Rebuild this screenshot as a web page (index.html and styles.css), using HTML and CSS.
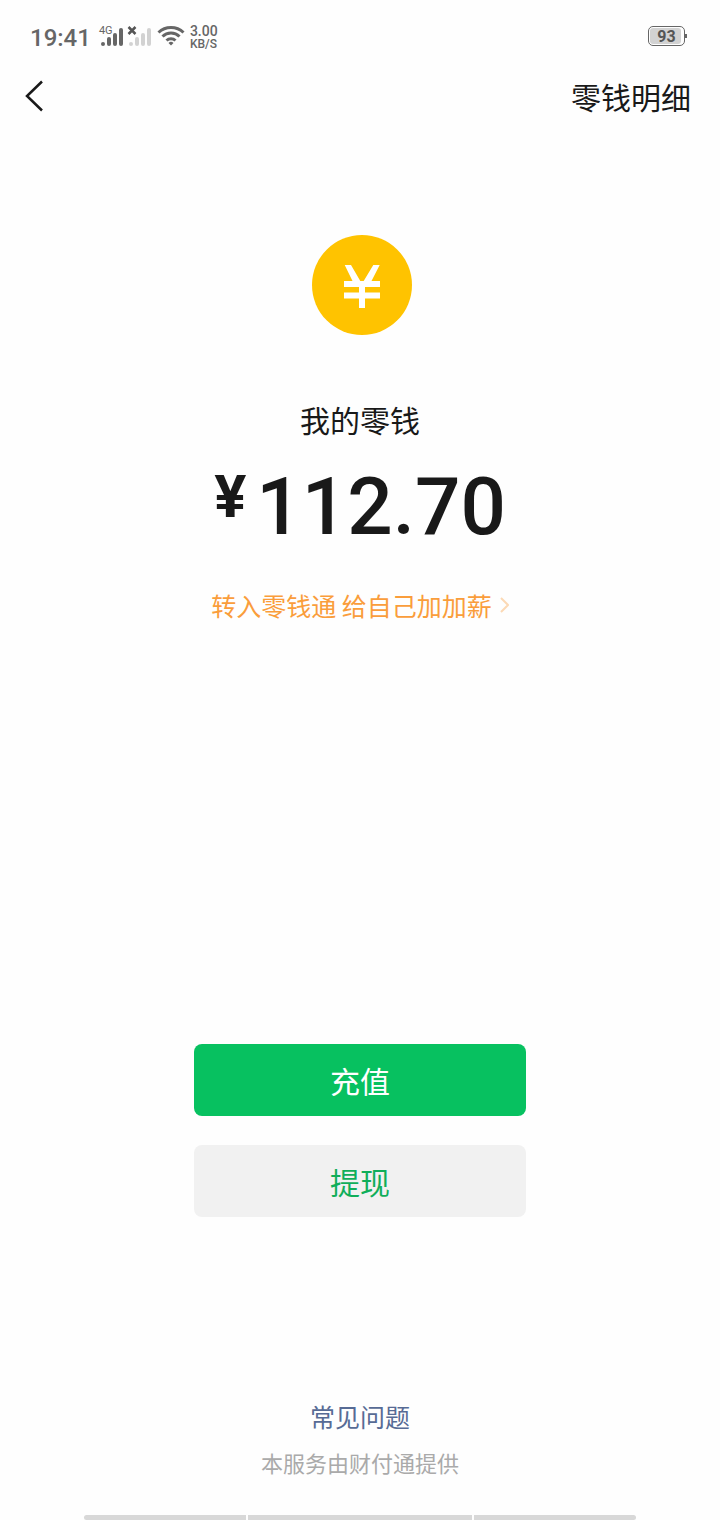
FILE: index.html
```
<!DOCTYPE html>
<html lang="zh-CN">
<head>
    <meta charset="UTF-8">
    <meta name="viewport" content="width=device-width, initial-scale=1.0">
    <title>我的零钱</title>
    <link rel="stylesheet" href="styles.css">
</head>
<body>

<!-- Status bar -->
<div class="status-bar">
    <span class="time">19:41</span>
    <div class="signal">
        <svg width="24" height="24" viewBox="0 0 24 24" fill="#666">
            <circle cx="4" cy="20" r="2"/>
            <rect x="8" y="13" width="4" height="9" rx="2"/>
            <rect x="14" y="9" width="4" height="13" rx="2"/>
            <rect x="20" y="4" width="4" height="18" rx="2"/>
        </svg>
        <span class="network">4G</span>
    </div>
    <svg class="no-sim" width="25" height="24" viewBox="0 0 25 24" fill="#d2d2d2">
        <circle cx="4" cy="20" r="2"/>
        <rect x="8" y="13" width="4" height="9" rx="2"/>
        <rect x="14" y="9" width="4" height="13" rx="2"/>
        <rect x="20" y="4" width="4" height="18" rx="2"/>
        <path d="M1.500 3l7 7M8.500 3l-7 7" stroke="#555" stroke-width="2.5"/>
    </svg>
    <svg class="wifi" width="28" height="22" viewBox="0 0 28 22" fill="none" stroke="#666" stroke-width="3">
        <path d="M1.500 7.500a18 18 0 0 1 25 0M5.500 11.500a12 12 0 0 1 17 0M9.500 15.500a6.500 6.500 0 0 1 9 0"/>
        <path d="M11.500 18a3.500 3.500 0 0 1 5 0L14 20.500z" fill="#666" stroke="none"/>
    </svg>
    <div class="speed">
        <div class="rate">3.00</div>
        <div class="unit">KB/S</div>
    </div>
    <div class="battery"><span class="level">93</span></div>
</div>

<!-- Navigation -->
<header class="nav">
    <button class="back" type="button" aria-label="返回">
        <svg width="20" height="32" viewBox="0 0 20 32" fill="none" stroke="#191919" stroke-width="2.5">
            <path d="M18 1.5L3 16l15 14.5"/>
        </svg>
    </button>
    <a class="detail" href="#">零钱明细</a>
</header>

<!-- Balance -->
<main class="balance">
    <svg class="coin" width="100" height="100" viewBox="0 0 100 100">
        <circle cx="50" cy="50" r="50" fill="#ffc300"/>
        <g fill="#fff">
            <path d="M32.700 30H39l9.300 16h3.400L61.300 30h6.400L59.500 46H68v6H53v5.500h15v6H53V73h-6v-9.500H32v-6h15V52H32v-6h8.500z"/>
        </g>
    </svg>
    <h1 class="title">我的零钱</h1>
    <div class="amount">
        <span class="currency">¥</span>
        <span class="value">112.70</span>
    </div>
    <a class="promo" href="#">
        转入零钱通 给自己加加薪
        <svg width="9" height="16" viewBox="0 0 9 16" fill="none" stroke="#fcd9b5" stroke-width="2">
            <path d="M1 1l7 7-7 7"/>
        </svg>
    </a>
</main>

<!-- Actions -->
<div class="actions">
    <button class="btn recharge" type="button">充值</button>
    <button class="btn withdraw" type="button">提现</button>
</div>

<footer class="footer">
    <a class="faq" href="#">常见问题</a>
    <p class="provider">本服务由财付通提供</p>
</footer>

<!-- System gesture bar -->
<div class="gesture-bar">
    <span></span>
    <span></span>
    <span></span>
</div>

</body>
</html>
```

FILE: styles.css
```
* {
    box-sizing: border-box;
}
body {
    font-family: "Noto Sans CJK SC", sans-serif;
    margin: 0;
    min-height: 100vh;
    display: flex;
    flex-direction: column;
    background-color: #fefefe;
    color: #191919;
}
a {
    text-decoration: none;
}
button {
    font-family: inherit;
    border: none;
    cursor: pointer;
}
svg {
    display: block;
}
.status-bar {
    display: flex;
    align-items: center;
    height: 72px;
    padding: 0 32px 0 30px;
    font-family: Roboto, sans-serif;
    color: #666;
}
.time {
    font-size: 24px;
    font-weight: 500;
    line-height: 28px;
    padding-top: 4px;
}
.signal {
    position: relative;
    margin-left: 8px;
}
.network {
    position: absolute;
    top: 1px;
    left: 0;
    font-size: 11px;
    line-height: 12px;
}
.no-sim {
    margin-left: 4px;
}
.wifi {
    margin-left: 5px;
}
.speed {
    margin-left: 5px;
    padding-top: 3px;
    font-weight: 500;
}
.rate {
    font-size: 14px;
    line-height: 13px;
}
.unit {
    font-size: 12px;
    line-height: 12px;
}
.battery {
    position: relative;
    margin-left: auto;
    margin-right: 3px;
    width: 37px;
    height: 20px;
    padding: 1px;
    border: 1px solid #666;
    border-radius: 5px;
}
.battery::after {
    content: "";
    position: absolute;
    top: 7px;
    right: -3px;
    width: 2px;
    height: 4px;
    background: #666;
}
.level {
    display: block;
    width: 31px;
    height: 16px;
    padding-left: 2px;
    border-radius: 3px;
    background: #d2d2d2;
    color: #555;
    font-size: 16px;
    font-weight: 700;
    line-height: 17px;
    text-align: center;
}
.nav {
    display: flex;
    align-items: center;
    justify-content: space-between;
    height: 48px;
    padding: 0 29px 0 24px;
}
.back {
    padding: 0;
    background: none;
}
.detail {
    color: #191919;
    font-size: 30px;
    line-height: 44px;
}
.balance {
    display: flex;
    flex-direction: column;
    align-items: center;
    padding-top: 115px;
}
.coin {
    margin-left: 4px;
}
.title {
    margin: 62px 0 0;
    font-size: 30px;
    font-weight: 400;
    line-height: 44px;
}
.amount {
    display: flex;
    align-items: flex-start;
    gap: 10px;
    margin-top: 14px;
    font-family: Roboto, sans-serif;
}
.currency {
    font-size: 60px;
    font-weight: 700;
    line-height: 84px;
}
.value {
    font-size: 80px;
    font-weight: 500;
    line-height: 104px;
}
.promo {
    display: flex;
    align-items: center;
    gap: 8px;
    margin-top: 28px;
    color: #fa9d3b;
    font-size: 25px;
    line-height: 36px;
}
.actions {
    display: flex;
    flex-direction: column;
    align-items: center;
    gap: 29px;
    margin-top: auto;
}
.btn {
    width: 46%;
    height: 72px;
    border-radius: 8px;
    font-size: 30px;
    line-height: 44px;
}
.recharge {
    background: #07c160;
    color: #fff;
}
.withdraw {
    background: #f1f1f1;
    color: #10ae5a;
}
.footer {
    display: flex;
    flex-direction: column;
    align-items: center;
    margin-top: 181px;
}
.faq {
    color: #576b95;
    font-size: 25px;
    line-height: 36px;
}
.provider {
    margin: 12px 0 0;
    color: #aaa;
    font-size: 22px;
    line-height: 32px;
}
.gesture-bar {
    display: grid;
    grid-template-columns: 162fr 224fr 162fr;
    gap: 2px;
    margin-top: 37px;
    padding: 0 84px;
}
.gesture-bar span {
    height: 5px;
    background: #d8d8d8;
}
.gesture-bar span:first-child {
    border-radius: 3px 0 0 3px;
}
.gesture-bar span:last-child {
    border-radius: 0 3px 3px 0;
}
```
